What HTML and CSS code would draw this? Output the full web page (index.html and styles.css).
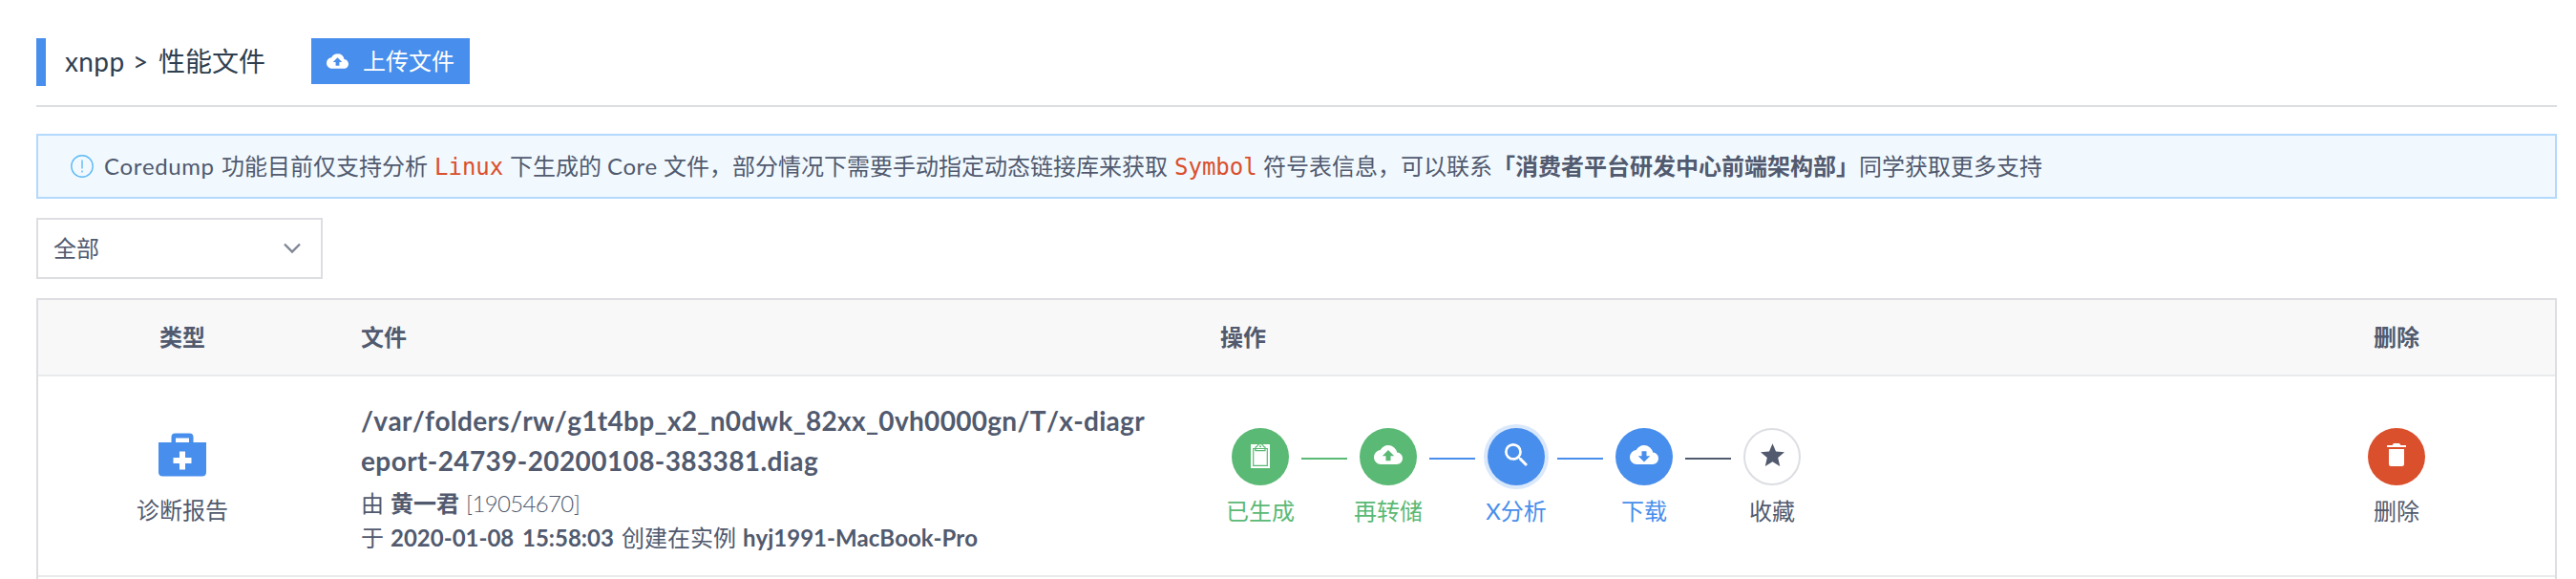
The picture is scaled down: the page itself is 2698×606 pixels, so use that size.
FILE: index.html
```html
<!DOCTYPE html>
<html lang="zh-CN">
<head>
<meta charset="utf-8">
<title>xnpp - 性能文件</title>
<link rel="stylesheet" href="styles.css">
</head>
<body>
<main class="page">
  <header class="page-head">
    <h1 class="title"><span class="w w-app">xnpp</span><span class="w w-gt">&gt;</span>性能文件</h1>
    <button class="upload" type="button">
      <svg class="upload-icon" viewBox="0 4 24 16"><path d="M19.35 10.04A7.49 7.49 0 0 0 12 4C9.11 4 6.6 5.64 5.35 8.04A5.994 5.994 0 0 0 0 14c0 3.31 2.69 6 6 6h13c2.76 0 5-2.24 5-5 0-2.64-2.05-4.78-4.65-4.96zM14 13v4h-4v-4H7l5-5 5 5h-3z"/></svg>
      <span>上传文件</span>
    </button>
  </header>

  <section class="alert">
    <svg class="alert-icon" viewBox="0 0 24 24"><circle cx="12" cy="12" r="11.2"/><path d="M12 5.5v9M12 16.5v2"/></svg>
    <p class="alert-text"><span class="w w-coredump">Coredump</span>功能目前仅支持分析<code class="w w-linux">Linux</code>下生成的<span class="w w-core">Core</span>文件，部分情况下需要手动指定动态链接库来获取<code class="w w-symbol">Symbol</code>符号表信息，可以联系<b>「消费者平台研发中心前端架构部」</b>同学获取更多支持</p>
  </section>

  <div class="select">
    <span>全部</span>
    <svg class="chevron" viewBox="0 0 18 12"><path d="M1 1.5l8 8 8-8"/></svg>
  </div>

  <section class="table">
    <div class="row head">
      <div class="cell center">类型</div>
      <div class="cell">文件</div>
      <div class="cell">操作</div>
      <div class="cell center last">删除</div>
    </div>
    <div class="row body">
      <div class="cell type">
        <svg class="type-icon" viewBox="0 0 50 46"><path fill-rule="evenodd" d="M13.500 10V4.500Q13.500 .5 17.500 .5H32.500Q36.500 .5 36.500 4.500V10H50V41Q50 45.500 45.500 45.500H4.500Q0 45.500 0 41V10ZM18 10H32V5.500H18ZM22 19.500V26H15.500V32H22V38.500H28V32H34.500V26H28V19.500Z"/></svg>
        <span>诊断报告</span>
      </div>
      <div class="cell file">
        <div class="path path-a">/var/folders/rw/g1t4bp_x2_n0dwk_82xx_0vh0000gn/T/x-diagr</div>
        <div class="path path-b">eport-24739-20200108-383381.diag</div>
        <div class="meta first">由<b class="user">黄一君</b><span class="w w-id">[19054670]</span></div>
        <div class="meta">于<b class="w w-date">2020-01-08</b><b class="w w-time">15:58:03</b>创建在实例<b class="w w-host">hyj1991-MacBook-Pro</b></div>
      </div>
      <div class="cell actions">
        <div class="step green">
          <span class="dot"><svg class="ico" viewBox="0 0 30 30"><path d="M5 4H25V29H5Z"/><path class="cut" d="M7.700 8.500H22.300V26.300H7.700ZM9.700 10.500V8.500M10 10.700V7Q11.500 6.600 12 5.500Q13 3.400 15 3.400T18 5.500Q18.500 6.600 20 7V10.700Z"/><circle class="hole" cx="15" cy="6.300" r="1"/></svg></span>
          <span>已生成</span>
        </div>
        <i class="link green"></i>
        <div class="step green">
          <span class="dot"><svg class="ico cloud" viewBox="0 4 24 16"><path d="M19.350 10.040A7.490 7.490 0 0 0 12 4C9.110 4 6.600 5.640 5.350 8.040A5.994 5.994 0 0 0 0 14c0 3.310 2.690 6 6 6h13c2.760 0 5-2.240 5-5 0-2.640-2.050-4.780-4.650-4.960zM14 13v4h-4v-4H7l5-5 5 5h-3z"/></svg></span>
          <span>再转储</span>
        </div>
        <i class="link blue"></i>
        <div class="step blue active">
          <span class="dot"><svg class="ico search" viewBox="3 3 17.500 17.500"><path d="M15.500 14h-.79l-.28-.27A6.471 6.471 0 0 0 16 9.500 6.500 6.500 0 1 0 9.500 16c1.610 0 3.090-.59 4.230-1.570l.27.28v.79l5 4.990L20.490 19l-4.990-5zm-6 0C7.010 14 5 11.990 5 9.500S7.010 5 9.500 5 14 7.010 14 9.500 11.990 14 9.500 14z"/></svg></span>
          <span>X分析</span>
        </div>
        <i class="link blue"></i>
        <div class="step blue">
          <span class="dot"><svg class="ico cloud" viewBox="0 4 24 16"><path d="M19.350 10.040A7.490 7.490 0 0 0 12 4C9.110 4 6.600 5.640 5.350 8.040A5.994 5.994 0 0 0 0 14c0 3.310 2.690 6 6 6h13c2.760 0 5-2.240 5-5 0-2.640-2.050-4.780-4.650-4.960zM17 13l-5 5-5-5h3V9h4v4h3z"/></svg></span>
          <span>下载</span>
        </div>
        <i class="link dark"></i>
        <div class="step plain">
          <span class="dot"><svg class="ico star" viewBox="2 2 20 19"><path d="M12 17.270L18.180 21l-1.640-7.030L22 9.240l-7.190-.61L12 2 9.190 8.630 2 9.240l5.460 4.730L5.820 21z"/></svg></span>
          <span>收藏</span>
        </div>
      </div>
      <div class="cell remove last">
        <div class="step red">
          <span class="dot"><svg class="ico trash" viewBox="0 0 20 24"><path d="M2 6H18V21.500Q18 24 15.500 24H4.500Q2 24 2 21.500ZM0 2H5.500L7 0H13L14.500 2H20V4H0Z"/></svg></span>
          <span class="remove-label">删除</span>
        </div>
      </div>
    </div>
  </section>
</main>
</body>
</html>
```
FILE: styles.css
```css
* { box-sizing: border-box; }
body {
  margin: 0;
  background: #fff;
  color: #515a6e;
  font: 400 24px/36px Lato, "Noto Sans CJK SC", sans-serif;
  font-kerning: none;
}
.page { height: 606px; padding: 40px 20px 0 38px; overflow: hidden; }
b { font-weight: 700; }
.w { display: inline-block; white-space: nowrap; }

.page-head { display: flex; align-items: flex-start; height: 72px; border-bottom: 2px solid #dcdee2; }
.title {
  width: 288px;
  height: 50px;
  margin: 0;
  padding-left: 20px;
  border-left: 10px solid #488eec;
  color: #2f3f4f;
  font-size: 28px;
  font-weight: 400;
  line-height: 48px;
  white-space: nowrap;
}
.w-app { width: 71px; letter-spacing: .4px; }
.w-gt { width: 27px; }
.upload {
  display: flex;
  align-items: center;
  gap: 15px;
  width: 166px;
  height: 48px;
  padding: 0 0 0 16px;
  border: 0;
  background: #488eec;
  color: #fff;
  font: inherit;
}
.upload-icon { width: 23px; height: 16px; fill: currentColor; }

.alert {
  display: flex;
  align-items: center;
  gap: 11px;
  height: 68px;
  margin-top: 28px;
  padding-left: 34px;
  border: 2px solid #b3d9fd;
  background: #f1f9ff;
}
.alert-icon { width: 24px; height: 24px; fill: none; stroke: #5ebaf5; stroke-width: 1.4; }
.alert-text { margin: 0; white-space: nowrap; }
.w-coredump { width: 123px; letter-spacing: .55px; }
.w-core { width: 65px; padding-left: 6px; letter-spacing: .4px; }
code { color: #da4f2c; font: 24px/36px "DejaVu Sans Mono", monospace; }
.w-linux { width: 86px; padding-left: 7px; }
.w-symbol { width: 100px; padding-left: 7px; }

.select {
  display: flex;
  align-items: center;
  justify-content: space-between;
  width: 300px;
  height: 64px;
  margin-top: 20px;
  padding: 0 21px 0 16px;
  border: 2px solid #dcdee2;
}
.chevron { width: 18px; height: 12px; fill: none; stroke: #808695; stroke-width: 2.4; }

.table { height: 320px; margin-top: 20px; border: 2px solid #dcdee2; }
.row { display: grid; grid-template-columns: 302px 900px 1100px 1fr; border-bottom: 2px solid #e8eaec; }
.head { height: 80px; line-height: 78px; background: #f8f8f9; font-weight: 700; }
.body { height: 210px; }
.cell { padding: 0 36px; }
.center { text-align: center; }
.last { padding-left: 38px; }
.type { display: flex; flex-direction: column; align-items: center; padding-top: 59px; gap: 17px; }
.type-icon { width: 50px; height: 46px; fill: #488eec; }

.file { padding-top: 25px; white-space: nowrap; }
.path { font-size: 28px; font-weight: 700; line-height: 42px; }
.path-a { letter-spacing: .31px; }
.path-b { letter-spacing: .4px; }
.meta { height: 36px; }
.first { margin-top: 6px; }
.user { margin: 0 7px; }
.w-id { font-weight: 300; letter-spacing: -.65px; }
.w-date { width: 138px; margin-left: 7px; }
.w-time { width: 104px; }
.w-host { margin-left: 7px; }

.actions { display: flex; padding-top: 54px; }
.step { display: flex; flex-direction: column; align-items: center; gap: 9px; width: 84px; white-space: nowrap; }
.dot { display: flex; align-items: center; justify-content: center; width: 60px; height: 60px; border-radius: 50%; color: #fff; }
.ico { width: 30px; height: 30px; fill: currentColor; margin-top: -4px; }
.cut { fill: none; stroke: #5ab974; stroke-width: 1.2; }
.hole { fill: #5ab974; }
.cloud { width: 30px; height: 20px; }
.search { width: 24px; height: 24px; }
.star { width: 25px; height: 24px; }
.trash { width: 20px; height: 24px; }
.green { color: #5ab974; }
.green .dot { background: #5ab974; }
.blue { color: #488eec; }
.blue .dot { background: #488eec; }
.active .dot { box-shadow: 0 0 0 4px #dae8fb; }
.plain .dot { border: 2px solid #dcdee2; color: #515a6e; }
.red .dot { background: #da4f2c; }
.remove-label { color: #515a6e; }
.link { width: 48px; height: 2px; margin: 31px 1px 0; background: currentColor; }
.remove { display: flex; justify-content: center; padding-top: 54px; }
```
